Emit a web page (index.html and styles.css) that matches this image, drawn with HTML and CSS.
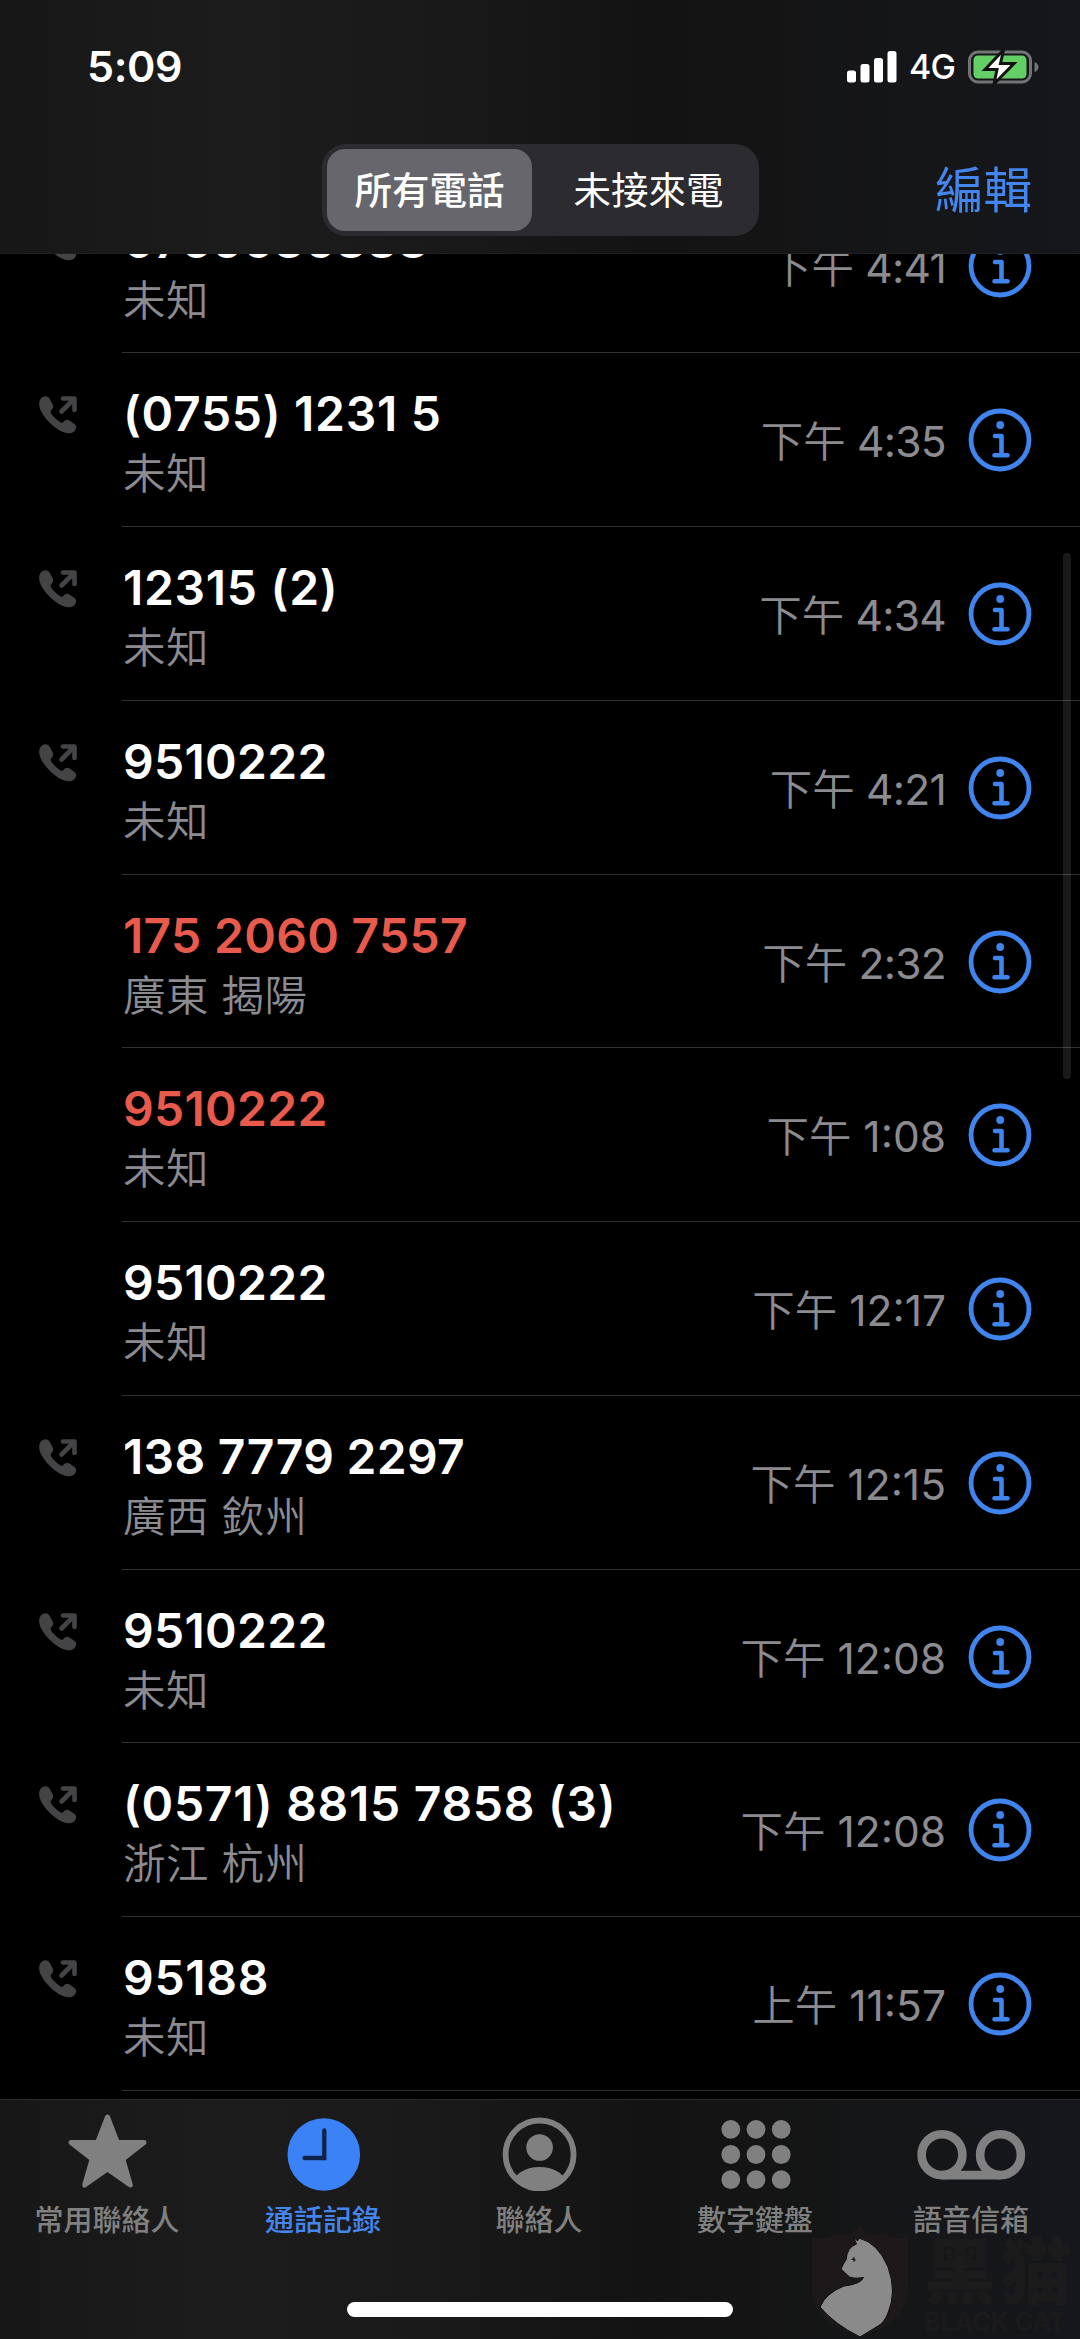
FILE: index.html
```html
<!DOCTYPE html>
<html lang="zh-Hant">
<head>
<meta charset="utf-8">
<title>通話記錄</title>
<link rel="stylesheet" href="styles.css">
</head>
<body>
<svg class="defs" width="0" height="0">
  <defs>
    <symbol id="outgoing" viewBox="0 0 38 38">
      <path d="M1 4 C3 0 8 -1 10.500 2.500 L13.500 8 C15 11 14 12.500 12 14.500 C11 16 12 18 15.500 21.500 C19.500 25.500 22 27.500 24 26.500 C26 24 28 23 30.500 24.500 L35.500 28 C38.500 30.500 37 34 34.500 36 C29 39.500 20 35.500 11.500 27.500 C3 19 -2 10 1 4 Z"/>
      <path class="arrow" d="M22.500 15.500 L34.500 3.500 M24 2.500 H35.500 V14"/>
    </symbol>
    <symbol id="info" viewBox="0 0 64 64">
      <circle class="ring" cx="32" cy="32" r="29"/>
      <circle cx="32.200" cy="17" r="3.900"/>
      <path class="stem" d="M27 28 H33.500 V47.300 M26.500 47.300 H39.500"/>
    </symbol>
  </defs>
</svg>
<div class="phone">
  <header class="top">
    <div class="status">
      <span class="clock">5:09</span>
      <div class="signals">
        <svg class="bars" width="50" height="32" viewBox="0 0 50 32"><rect x="0" y="19.500" width="9" height="12" rx="2.500"/><rect x="13.500" y="13" width="9" height="18.500" rx="2.500"/><rect x="27" y="7" width="9" height="24.500" rx="2.500"/><rect x="40.500" y="0" width="9" height="31.500" rx="2.500"/></svg>
        <span class="net">4G</span>
        <svg class="battery" width="72" height="36" viewBox="0 0 72 36">
          <rect class="case" x="1.500" y="3" width="61" height="30" rx="8.500"/>
          <path class="nub" d="M66.500 13 Q70.500 14.500 70.500 18 Q70.500 21.500 66.500 23 Z"/>
          <rect class="charge" x="5.500" y="6.500" width="53" height="23" rx="4.500"/>
          <path class="bolt" d="M35.500 1 L17 20.500 H29 L26 35 L46 14.500 H32.500 Z"/>
        </svg>
      </div>
    </div>
    <div class="nav">
      <div class="segments"><span class="segment on">所有電話</span><span class="segment">未接來電</span></div>
      <span class="edit">編輯</span>
    </div>
  </header>
  <main class="calls">
    <div class="call"><svg class="out"><use href="#outgoing"/></svg><div class="body"><div class="who"><b>0755686888</b><span>未知</span></div><time class="tight"><i>下午</i> 4:41</time><svg class="info"><use href="#info"/></svg></div></div>
    <div class="call"><svg class="out"><use href="#outgoing"/></svg><div class="body"><div class="who"><b class="wide">(0755) 1231 5</b><span>未知</span></div><time class="tight"><i>下午</i> 4:35</time><svg class="info"><use href="#info"/></svg></div></div>
    <div class="call"><svg class="out"><use href="#outgoing"/></svg><div class="body"><div class="who"><b class="wide">12315 (2)</b><span>未知</span></div><time class="tight"><i>下午</i> 4:34</time><svg class="info"><use href="#info"/></svg></div></div>
    <div class="call"><svg class="out"><use href="#outgoing"/></svg><div class="body"><div class="who"><b>9510222</b><span>未知</span></div><time class="tight"><i>下午</i> 4:21</time><svg class="info"><use href="#info"/></svg></div></div>
    <div class="call missed"><div class="body"><div class="who"><b>175 2060 7557</b><span>廣東 揭陽</span></div><time class="tight"><i>下午</i> 2:32</time><svg class="info"><use href="#info"/></svg></div></div>
    <div class="call missed"><div class="body"><div class="who"><b>9510222</b><span>未知</span></div><time><i>下午</i> 1:08</time><svg class="info"><use href="#info"/></svg></div></div>
    <div class="call"><div class="body"><div class="who"><b>9510222</b><span>未知</span></div><time><i>下午</i> 12:17</time><svg class="info"><use href="#info"/></svg></div></div>
    <div class="call"><svg class="out"><use href="#outgoing"/></svg><div class="body"><div class="who"><b>138 7779 2297</b><span>廣西 欽州</span></div><time><i>下午</i> 12:15</time><svg class="info"><use href="#info"/></svg></div></div>
    <div class="call"><svg class="out"><use href="#outgoing"/></svg><div class="body"><div class="who"><b>9510222</b><span>未知</span></div><time><i>下午</i> 12:08</time><svg class="info"><use href="#info"/></svg></div></div>
    <div class="call"><svg class="out"><use href="#outgoing"/></svg><div class="body"><div class="who"><b class="wide">(0571) 8815 7858 (3)</b><span>浙江 杭州</span></div><time><i>下午</i> 12:08</time><svg class="info"><use href="#info"/></svg></div></div>
    <div class="call"><svg class="out"><use href="#outgoing"/></svg><div class="body"><div class="who"><b class="wide">95188</b><span>未知</span></div><time><i>上午</i> 11:57</time><svg class="info"><use href="#info"/></svg></div></div>
    <div class="scrollbar"></div>
  </main>
  <footer class="bottom">
    <nav class="tabs">
      <div class="tab">
        <svg width="110" height="80" viewBox="0 0 110 80"><path class="star" d="M54.500 6 L64.300 31.500 H91 L69.800 48 L77.300 74 L54.500 58 L31.700 74 L39.200 48 L18 31.500 H44.700 Z"/></svg>
        <span>常用聯絡人</span>
      </div>
      <div class="tab active">
        <svg width="110" height="80" viewBox="0 0 110 80"><circle cx="54.800" cy="43.500" r="36.300"/><path class="hands" d="M55.300 19.500 V47 H35.500"/></svg>
        <span>通話記錄</span>
      </div>
      <div class="tab">
        <svg width="110" height="80" viewBox="0 0 110 80"><clipPath id="face"><circle cx="54.600" cy="43.500" r="35"/></clipPath><circle class="rim" cx="54.600" cy="43.500" r="34"/><circle cx="54.600" cy="36.500" r="13.300"/><ellipse cx="54.600" cy="74" rx="27" ry="18" clip-path="url(#face)"/></svg>
        <span>聯絡人</span>
      </div>
      <div class="tab">
        <svg width="110" height="80" viewBox="0 0 110 80"><g><circle cx="29.800" cy="18.300" r="9.400"/><circle cx="55" cy="18.300" r="9.400"/><circle cx="80.200" cy="18.300" r="9.400"/><circle cx="29.800" cy="43.500" r="9.400"/><circle cx="55" cy="43.500" r="9.400"/><circle cx="80.200" cy="43.500" r="9.400"/><circle cx="29.800" cy="68.700" r="9.400"/><circle cx="55" cy="68.700" r="9.400"/><circle cx="80.200" cy="68.700" r="9.400"/></g></svg>
        <span>數字鍵盤</span>
      </div>
      <div class="tab">
        <svg width="110" height="80" viewBox="0 0 110 80"><g class="reels"><circle cx="25" cy="43.700" r="20.400"/><circle cx="83.500" cy="43.700" r="20.400"/><path d="M25 64.100 H83.500"/></g></svg>
        <span>語音信箱</span>
      </div>
    </nav>
    <div class="home"></div>
    <div class="brand">
      <svg width="100" height="114" viewBox="0 0 100 114">
        <path class="shield" d="M2 12 Q14 18 26 9 Q40 14 50 1 Q60 14 74 9 Q86 18 98 12 V66 Q98 98 50 113 Q2 98 2 66 Z"/>
        <path class="cat" d="M43.500 13 L47.500 17 L49 14 Q68 19 78 43 Q87 68 78 89 Q74 99 68 102 L50 113 Q24 100 10 83 Q16 69 34 62 Q51 60 53.500 53.500 Q44 55 39.500 53 L31 45 Q33 40 36 36 Q37 23 46.500 20 Z"/>
        <path class="eye" d="M41 36 L44.500 32.500 V36 Z M46 36 L43.500 38 V34 Z"/>
      </svg>
      <div class="brandname"><strong>黑猫</strong><em>BLACK CAT</em></div>
    </div>
  </footer>
</div>
</body>
</html>
```
FILE: styles.css
```css
* { box-sizing: border-box; margin: 0; padding: 0; }
body { background: #000; }
.defs { display: block; position: absolute; }
.phone {
  width: 1080px; height: 2339px; overflow: hidden;
  display: flex; flex-direction: column;
  background: #000; color: #fff;
  font-family: Inter, "Noto Sans CJK TC", sans-serif;
}
.top {
  flex: none; height: 254px; z-index: 1;
  display: flex; flex-direction: column;
  background: linear-gradient(90deg, #171717 0, #1c1c1c 22%, #181818 45%, #131313 60%, #151618 85%, #15171b 100%);
  border-bottom: 1px solid #1f1f20;
}
.status { height: 144px; padding: 40px 40px 0 87px; display: flex; justify-content: space-between; align-items: flex-start; }
.clock { font-size: 43px; line-height: 52px; font-weight: 600; letter-spacing: -.4px; }
.signals { display: flex; align-items: center; height: 53px; }
.bars { fill: #fff; display: block; }
.net { font-size: 34px; line-height: 50px; font-weight: 450; margin-left: 12px; width: 47px; white-space: nowrap; letter-spacing: -.8px; }
.battery { display: block; margin-left: 12px; }
.case { fill: none; stroke: #747477; stroke-width: 3; }
.nub { fill: #747477; }
.charge { fill: #64cf64; }
.bolt { fill: #fff; stroke: #121212; stroke-width: 3; }
.nav { height: 92px; padding: 0 48px 0 322px; display: flex; justify-content: space-between; }
.segments { width: 437px; height: 92px; padding: 5px; display: flex; border-radius: 24px; background: #2c2c30; }
.segment { width: 205px; height: 82px; border-radius: 18px; text-align: center; font-size: 37.500px; line-height: 83px; }
.segment + .segment { margin-left: 14px; }
.on { background: #67666c; font-weight: 500; }
.edit { color: #4585ee; font-size: 48.500px; line-height: 94px; }
.calls { flex: 1; min-height: 0; position: relative; overflow: hidden; display: flex; flex-direction: column; justify-content: flex-end; padding-bottom: 8px; }
.call { flex: none; height: 173.780px; display: flex; }
.out { flex: none; width: 38px; height: 38px; margin: 43px 0 0 39px; fill: #444447; }
.arrow { fill: none; stroke: #444447; stroke-width: 4.600; stroke-linecap: round; stroke-linejoin: round; }
.body { flex: none; width: 958px; margin-left: auto; display: flex; align-items: center; border-bottom: 1px solid #303032; padding: 1px 48px 0 0; }
.who { flex: 1; height: 100%; display: flex; flex-direction: column; padding: 30px 0 0 1px; }
.who b { font-size: 48px; line-height: 59px; font-weight: 600; white-space: pre; letter-spacing: .3px; }
.who .wide { letter-spacing: .7px; }
.who span { font-size: 42.500px; line-height: 61px; color: #8b8b90; font-weight: 350; letter-spacing: .5px; }
.missed b { color: #e85a4c; }
time { font-size: 42.500px; line-height: 60px; color: #8b8b90; font-weight: 400; white-space: pre; padding-top: 4px; }
.tight { letter-spacing: -.7px; }
time i { font-style: normal; font-weight: 350; letter-spacing: 0; }
.info { width: 64px; height: 64px; margin-left: 22px; fill: #4084ee; }
.ring { fill: none; stroke: #4084ee; stroke-width: 4.800; }
.stem { fill: none; stroke: #4084ee; stroke-width: 4.600; stroke-linecap: round; stroke-linejoin: round; }
.scrollbar { position: absolute; right: 9px; top: 299px; width: 8px; height: 526px; border-radius: 4px; background: rgba(255,255,255,.1); }
.bottom {
  flex: none; height: 240px; position: relative;
  display: flex; flex-direction: column; align-items: center;
  background: linear-gradient(90deg, #171717 0, #1c1c1c 20%, #1a1a1a 38%, #131313 60%, #151617 80%, #15171c 100%);
  border-top: 1px solid #2b2b2b;
}
.tabs { width: 1080px; height: 202px; display: flex; z-index: 1; }
.tab { width: 216px; padding-top: 11px; display: flex; flex-direction: column; align-items: center; color: #808080; fill: #808080; }
.tab svg { display: block; }
.tab span { font-size: 29px; line-height: 40px; margin: 10px 2px 0 0; font-weight: 500; }
.active { color: #4585ee; fill: #3b82f7; }
.star { stroke: #808080; stroke-width: 5; stroke-linejoin: round; }
.hands { fill: none; stroke: #10244a; stroke-width: 4.300; stroke-linecap: round; }
.rim { fill: none; stroke: #808080; stroke-width: 5.800; }
.reels { fill: none; stroke: #808080; stroke-width: 8.600; }
.home { width: 386px; height: 15px; border-radius: 8px; background: #fff; }
.brand { position: absolute; left: 810px; top: 124px; width: 270px; display: flex; }
.shield { fill: #1d191a; }
.cat { fill: #8a8a8a; stroke: #0c0c0c; stroke-width: 1; }
.eye { fill: #1d191a; }
.brand svg { flex: none; }
.brandname { display: flex; flex-direction: column; margin: 14px 0 0 14px; color: #1c1b1c; }
.brandname strong { font-size: 72px; line-height: 68px; font-weight: 900; letter-spacing: 4px; white-space: nowrap; }
.brandname em { font-style: normal; font-weight: 700; font-size: 25px; line-height: 26px; margin-top: 3px; white-space: nowrap; }
```
